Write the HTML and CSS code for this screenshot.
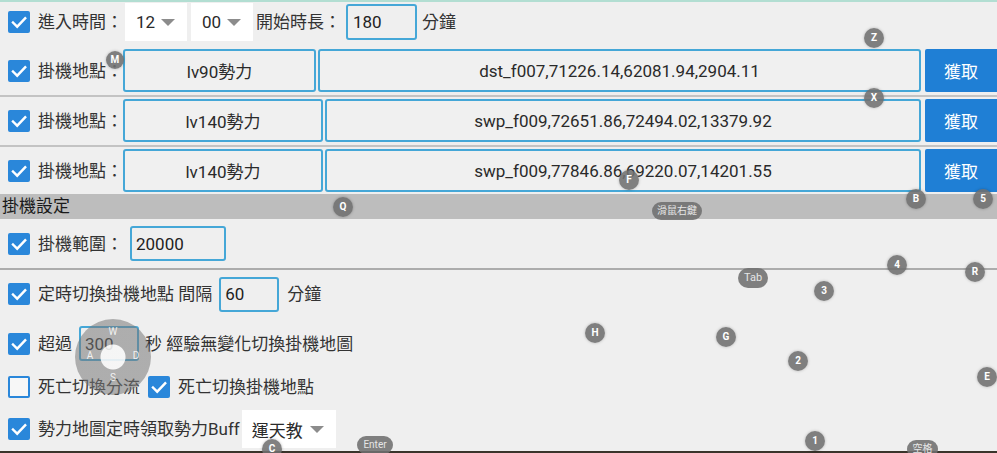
FILE: index.html
```html
<!DOCTYPE html>
<html lang="zh-Hant">
<head>
<meta charset="utf-8">
<title>掛機設定</title>
<link rel="stylesheet" href="styles.css">
</head>
<body>
<div class="app">
  <div class="row row-time">
    <span class="cb on"><svg viewBox="0 0 22 22"><path d="M5 11.5l4.2 4.2 8-8.4"/></svg></span>
    <span class="label">進入時間：</span>
    <div class="select s-hour"><span>12</span><i class="caret"></i></div>
    <div class="select s-min"><span>00</span><i class="caret"></i></div>
    <span class="label l-dur">開始時長：</span>
    <span class="input w-dur">180</span>
    <span class="label l-unit">分鐘</span>
  </div>

  <div class="row spot sep">
    <span class="cb on"><svg viewBox="0 0 22 22"><path d="M5 11.5l4.2 4.2 8-8.4"/></svg></span>
    <span class="label">掛機地點：</span>
    <div class="box name n-short">lv90勢力</div>
    <div class="box coord">dst_f007,71226.14,62081.94,2904.11</div>
    <button class="btn">獲取</button>
  </div>

  <div class="row spot sep">
    <span class="cb on"><svg viewBox="0 0 22 22"><path d="M5 11.5l4.2 4.2 8-8.4"/></svg></span>
    <span class="label">掛機地點：</span>
    <div class="box name">lv140勢力</div>
    <div class="box coord">swp_f009,72651.86,72494.02,13379.92</div>
    <button class="btn">獲取</button>
  </div>

  <div class="row spot last">
    <span class="cb on"><svg viewBox="0 0 22 22"><path d="M5 11.5l4.2 4.2 8-8.4"/></svg></span>
    <span class="label">掛機地點：</span>
    <div class="box name">lv140勢力</div>
    <div class="box coord">swp_f009,77846.86,69220.07,14201.55</div>
    <button class="btn">獲取</button>
  </div>

  <div class="section">掛機設定</div>

  <div class="row row-range">
    <span class="cb on"><svg viewBox="0 0 22 22"><path d="M5 11.5l4.2 4.2 8-8.4"/></svg></span>
    <span class="label">掛機範圍：</span>
    <span class="input w-range">20000</span>
  </div>

  <div class="row row-switch">
    <span class="cb on"><svg viewBox="0 0 22 22"><path d="M5 11.5l4.2 4.2 8-8.4"/></svg></span>
    <span class="label">定時切換掛機地點 間隔</span>
    <span class="input w-small">60</span>
    <span class="label l-unit2">分鐘</span>
  </div>

  <div class="row row-exp">
    <span class="cb on"><svg viewBox="0 0 22 22"><path d="M5 11.5l4.2 4.2 8-8.4"/></svg></span>
    <span class="label">超過</span>
    <span class="input w-small">300</span>
    <span class="label l-sec">秒 經驗無變化切換掛機地圖</span>
  </div>

  <div class="row row-death">
    <span class="cb off"></span>
    <span class="label">死亡切換分流</span>
    <span class="cb on cb-2"><svg viewBox="0 0 22 22"><path d="M5 11.5l4.2 4.2 8-8.4"/></svg></span>
    <span class="label">死亡切換掛機地點</span>
  </div>

  <div class="row row-buff">
    <span class="cb on"><svg viewBox="0 0 22 22"><path d="M5 11.5l4.2 4.2 8-8.4"/></svg></span>
    <span class="label">勢力地圖定時領取勢力Buff</span>
    <div class="select s-buff"><span>運天教</span><i class="caret"></i></div>
  </div>
</div>

<div class="keys">
  <span class="key k-m">M</span>
  <span class="key k-z">Z</span>
  <span class="key k-x">X</span>
  <span class="key k-f">F</span>
  <span class="key k-q">Q</span>
  <span class="pill p-rmb">滑鼠右鍵</span>
  <span class="key k-b">B</span>
  <span class="key k-5">5</span>
  <span class="pill p-tab">Tab</span>
  <span class="key k-4">4</span>
  <span class="key k-r">R</span>
  <span class="key k-3">3</span>
  <span class="key k-h">H</span>
  <span class="key k-g">G</span>
  <span class="key k-2">2</span>
  <span class="key k-e">E</span>
  <span class="key k-1">1</span>
  <span class="key k-c">C</span>
  <span class="pill p-enter">Enter</span>
  <span class="pill p-space">空格</span>
  <div class="stick">
    <span class="dir d-w">W</span>
    <span class="dir d-a">A</span>
    <span class="dir d-d">D</span>
    <span class="dir d-s">S</span>
  </div>
</div>
</body>
</html>
```

FILE: styles.css
```css
html, body {
  margin: 0;
  padding: 0;
  width: 997px;
  height: 453px;
  overflow: hidden;
}

body {
  background: #3a342b;
  font-family: "Roboto", "Noto Sans CJK TC", sans-serif;
  font-size: 17px;
  color: #333;
  position: relative;
}

.app {
  box-sizing: border-box;
  height: 451px;
  background: #efefef;
  border-top: 2px solid #b2ded2;
  overflow: hidden;
}

.row {
  display: flex;
  align-items: center;
  box-sizing: border-box;
}

.row-time {
  height: 45px;
  padding: 1px 0 6px;
}

.cb {
  box-sizing: border-box;
  flex: none;
  width: 22px;
  height: 22px;
  margin: 0 8px;
  border-radius: 2px;
  display: flex;
}

.cb.on {
  background: #2a87da;
}

.cb.off {
  border: 2px solid #2a87da;
  background: #f7f7f7;
}

.cb svg {
  width: 22px;
  height: 22px;
}

.cb path {
  fill: none;
  stroke: #fff;
  stroke-width: 2.4;
  stroke-linecap: square;
}

.label {
  flex: none;
  white-space: nowrap;
  line-height: 20px;
}

.select {
  box-sizing: border-box;
  flex: none;
  height: 38px;
  background: #fff;
  display: flex;
  align-items: center;
  color: #2a2a2a;
}

.caret {
  width: 0;
  height: 0;
  border-left: 7px solid transparent;
  border-right: 7px solid transparent;
  border-top: 7px solid #8c8c8c;
}

.s-hour {
  width: 62px;
  margin-left: 2px;
  padding-left: 11px;
}

.s-min {
  width: 62px;
  margin-left: 4px;
  padding-left: 11px;
}

.s-hour .caret,
.s-min .caret {
  margin-left: 6px;
}

.l-dur {
  margin-left: 3px;
}

.input {
  box-sizing: border-box;
  flex: none;
  height: 35px;
  border: 2px solid #45a7d7;
  border-radius: 3px;
  padding-left: 5px;
  display: flex;
  align-items: center;
  color: #222;
}

.w-dur {
  width: 71px;
  height: 36px;
  margin-left: 5px;
}

.l-unit {
  margin-left: 5px;
}

/* location rows */
.spot {
  padding: 2px 0 3px;
  height: 50px;
}

.spot.sep {
  border-bottom: 2px solid #c3c3c3;
}

.spot.last {
  height: 47px;
  padding-bottom: 2px;
}

.box {
  box-sizing: border-box;
  height: 43px;
  border: 2px solid #45a7d7;
  border-radius: 3px;
  background: #f0f0f0;
  display: flex;
  align-items: center;
  justify-content: center;
  color: #2a2a2a;
  white-space: nowrap;
}

.name {
  flex: none;
  width: 200px;
}

.name.n-short {
  width: 193px;
}

.coord {
  flex: 1;
  margin-left: 2px;
}

.btn {
  flex: none;
  width: 72px;
  height: 43px;
  margin-left: 4px;
  border: 0;
  border-radius: 2px 0 0 2px;
  background: #1f7fd5;
  color: #fff;
  font: inherit;
  padding: 0;
}

.section {
  height: 25px;
  line-height: 25px;
  background: #bdbdbd;
  padding-left: 2px;
  color: #1a1a1a;
}

.row-range {
  height: 51px;
  border-bottom: 2px solid #acacac;
}

.w-range {
  width: 96px;
  margin-left: 7px;
  padding-left: 4px;
}

.row-switch {
  height: 48px;
}

.w-small {
  width: 60px;
  margin-left: 7px;
  padding-left: 4px;
}

.l-unit2 {
  margin-left: 8px;
}

.row-exp {
  height: 51px;
}

.l-sec {
  margin-left: 6px;
}

.row-death {
  height: 35px;
}

.cb-2 {
  margin-left: 8px;
}

.row-buff {
  height: 47px;
  padding-top: 3px;
}

.s-buff {
  width: 94px;
  margin-left: 2px;
  padding-left: 10px;
}

.s-buff .caret {
  margin-left: 7px;
}

/* key mapping overlay */
.keys {
  position: absolute;
  left: 0;
  top: 0;
  width: 997px;
  height: 453px;
  pointer-events: none;
  font-family: "Roboto", "Noto Sans CJK TC", sans-serif;
}

.key {
  position: absolute;
  width: 20px;
  height: 20px;
  margin: -10px 0 0 -10px;
  border-radius: 50%;
  background: rgba(112, 112, 112, 0.88);
  box-shadow: 0 0 3px rgba(0, 0, 0, 0.25);
  color: #fff;
  font-size: 10px;
  font-weight: 700;
  line-height: 20px;
  text-align: center;
}

.pill {
  position: absolute;
  height: 18px;
  border-radius: 9px;
  background: rgba(112, 112, 112, 0.88);
  color: #e6e6e6;
  font-size: 10px;
  line-height: 18px;
  text-align: center;
}

.k-m { left: 115px; top: 60px; width: 18px; height: 18px; line-height: 18px; margin: -9px 0 0 -9px; }
.k-z { left: 874px; top: 38px; }
.k-x { left: 874px; top: 98px; }
.k-f { left: 629px; top: 180px; }
.k-q { left: 343px; top: 207px; }
.k-b { left: 916px; top: 199px; }
.k-5 { left: 983px; top: 199px; }
.k-4 { left: 897px; top: 265px; }
.k-r { left: 975px; top: 272px; }
.k-3 { left: 824px; top: 291px; }
.k-h { left: 595px; top: 333px; }
.k-g { left: 726px; top: 337px; }
.k-2 { left: 798px; top: 361px; }
.k-e { left: 987px; top: 377px; }
.k-1 { left: 815px; top: 441px; }
.k-c { left: 272px; top: 449px; }

.p-rmb { left: 652px; top: 202px; width: 50px; }
.p-tab { left: 738px; top: 268px; width: 30px; height: 20px; line-height: 20px; border-radius: 10px; font-size: 11px; }
.p-enter { left: 357px; top: 436px; width: 36px; }
.p-space { left: 907px; top: 440px; width: 31px; }

.stick {
  position: absolute;
  left: 75px;
  top: 319px;
  width: 76px;
  height: 76px;
  border-radius: 50%;
  background: radial-gradient(circle at 50% 50%, rgba(246, 246, 246, 0.9) 0, rgba(246, 246, 246, 0.9) 12px, rgba(120, 120, 120, 0.55) 13px);
}

.dir {
  position: absolute;
  width: 12px;
  margin-left: -6px;
  color: rgba(255, 255, 255, 0.85);
  font-size: 10px;
  line-height: 12px;
  text-align: center;
}

.d-w { left: 38px; top: 7px; }
.d-a { left: 15px; top: 31px; }
.d-d { left: 61px; top: 31px; }
.d-s { left: 38px; top: 53px; }
```
